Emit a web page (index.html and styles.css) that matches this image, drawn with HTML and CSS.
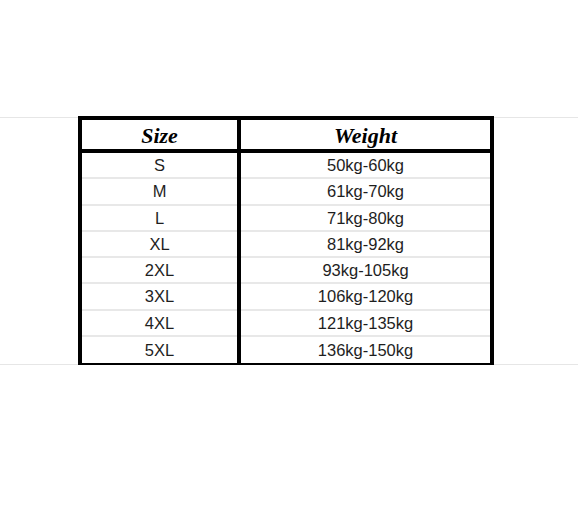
FILE: index.html
```html
<!DOCTYPE html>
<html>
<head>
<meta charset="utf-8">
<link rel="stylesheet" href="styles.css">
</head>
<body>
<div class="band">
  <div class="chart">
    <div class="cell head">Size</div>
    <div class="cell head">Weight</div>
    <div class="cell">S</div><div class="cell">50kg-60kg</div>
    <div class="cell">M</div><div class="cell">61kg-70kg</div>
    <div class="cell">L</div><div class="cell">71kg-80kg</div>
    <div class="cell">XL</div><div class="cell">81kg-92kg</div>
    <div class="cell">2XL</div><div class="cell">93kg-105kg</div>
    <div class="cell">3XL</div><div class="cell">106kg-120kg</div>
    <div class="cell">4XL</div><div class="cell">121kg-135kg</div>
    <div class="cell last">5XL</div><div class="cell last">136kg-150kg</div>
  </div>
</div>
</body>
</html>
```
FILE: styles.css
```css
html, body {
  margin: 0;
  padding: 0;
  background: #fff;
}
.band {
  margin-top: 117px;
  height: 246px;
  border-top: 1px solid #e6e6e6;
  border-bottom: 1px solid #e6e6e6;
}
.chart {
  margin-top: -2px;
  margin-left: 78px;
  width: 416px;
  box-sizing: border-box;
  border: 4px solid #000;
  background: #000;
  display: grid;
  grid-template-columns: 155px 249px;
  column-gap: 4px;
  font-family: "Liberation Sans", Arial, sans-serif;
  font-size: 16.5px;
  color: #1e1e1e;
}
.cell {
  box-sizing: border-box;
  height: 26.25px;
  background: #fff;
  border-bottom: 2px solid #e8e8e8;
  display: flex;
  align-items: center;
  justify-content: center;
  padding-top: 1px;
}
.cell.last {
  border-bottom: none;
}
.cell.head {
  height: 33px;
  border-bottom: 4px solid #000;
  font-family: "Liberation Serif", serif;
  font-style: italic;
  font-weight: bold;
  font-size: 22px;
  color: #000;
  padding-top: 2px;
}
```
